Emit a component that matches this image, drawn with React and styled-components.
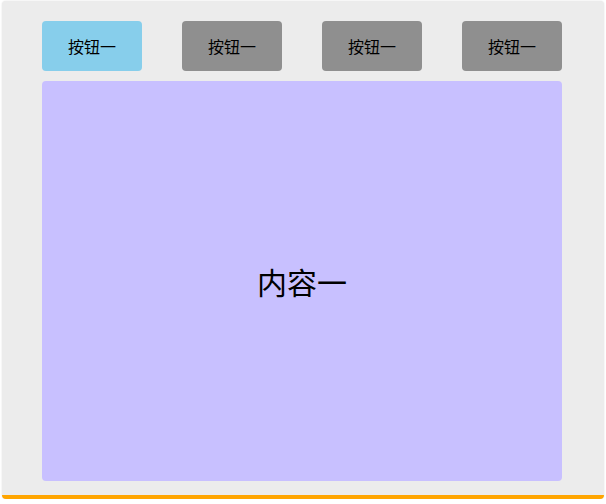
import React, { useState } from 'react'
import styled, { createGlobalStyle } from 'styled-components'

const GlobalStyle = createGlobalStyle`
  html, body {
    margin: 0;
    padding: 0;
    background: #ffffff;
  }
  body {
    font-family: "Microsoft YaHei", "Noto Sans CJK SC", sans-serif;
  }
`

const Panel = styled.div`
  box-sizing: border-box;
  width: 602px;
  margin: 1px 0 0 2px;
  padding: 20px 42px 14px 40px;
  background: #ececec;
  border-bottom: 4px solid #ffa500;
  border-radius: 4px;
  box-shadow: 0 0 2px rgba(0, 0, 0, 0.12);
`

const TabBar = styled.div`
  display: flex;
  justify-content: space-between;
  margin-bottom: 10px;
`

const TabButton = styled.button`
  width: 100px;
  height: 50px;
  border: none;
  border-radius: 4px;
  padding: 0;
  background: ${p => (p.$active ? '#87ceeb' : '#8f8f8f')};
  color: #000;
  font-family: inherit;
  font-size: 16px;
  cursor: pointer;
`

const Content = styled.div`
  height: 400px;
  display: flex;
  align-items: center;
  justify-content: center;
  background: #c8c0ff;
  border-radius: 4px;
  font-size: 30px;
  color: #000;
`

const tabs = ['按钮一', '按钮一', '按钮一', '按钮一']

export default function App() {
  const [active, setActive] = useState(0)
  return (
    <>
      <GlobalStyle />
      <Panel>
        <TabBar>
          {tabs.map((label, i) => (
            <TabButton key={i} $active={i === active} onClick={() => setActive(i)}>
              {label}
            </TabButton>
          ))}
        </TabBar>
        <Content>内容一</Content>
      </Panel>
    </>
  )
}
